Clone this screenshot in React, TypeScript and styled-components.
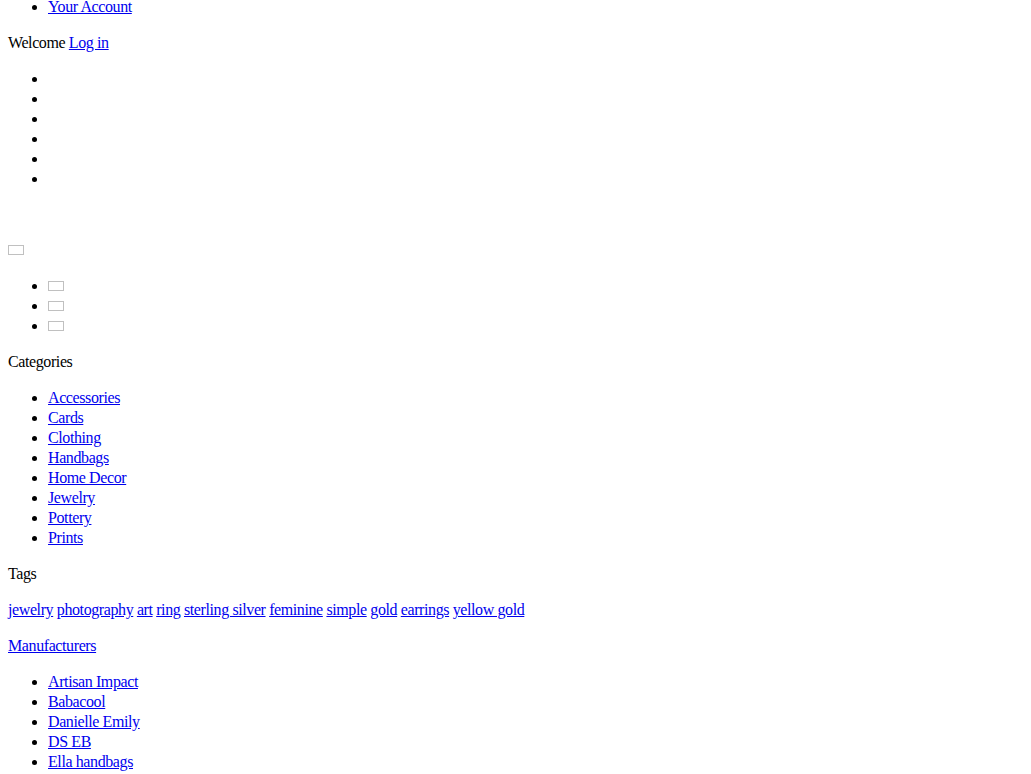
import React from "react";
import styled, { createGlobalStyle } from "styled-components";

const GlobalStyle = createGlobalStyle`
  html, body {
    margin: 0;
    padding: 0;
    background: #ffffff;
  }
  body {
    font-family: "Liberation Serif", "Times New Roman", serif;
    font-size: 16px;
    line-height: 20px;
    letter-spacing: -0.4px;
    color: #000000;
  }
`;

const Page = styled.div`
  padding: 0 8px;
  margin-top: -3px;
`;

const List = styled.ul<{ $first?: boolean }>`
  list-style: disc;
  margin: ${(p) => (p.$first ? "0 0 16px" : "16px 0")};
  padding-left: 40px;
`;

const Item = styled.li`
  min-height: 20px;
`;

const Para = styled.p`
  margin: 16px 0;
`;

const Spacer = styled.div`
  height: 19px;
  margin: 16px 0;
`;

const Link = styled.a`
  color: #0000ee;
  text-decoration: underline;
  cursor: pointer;
`;

const Thumb = styled.span`
  display: inline-block;
  width: 16px;
  height: 10px;
  box-sizing: border-box;
  border: 1px solid #c0c0c0;
`;

const categories = [
  "Accessories",
  "Cards",
  "Clothing",
  "Handbags",
  "Home Decor",
  "Jewelry",
  "Pottery",
  "Prints",
];

const tags = [
  "jewelry",
  "photography",
  "art",
  "ring",
  "sterling silver",
  "feminine",
  "simple",
  "gold",
  "earrings",
  "yellow gold",
];

const manufacturers = [
  "Artisan Impact",
  "Babacool",
  "Danielle Emily",
  "DS EB",
  "Ella handbags",
];

export default function App() {
  return (
    <>
      <GlobalStyle />
      <Page>
        <List $first>
          <Item>
            <Link>Your Account</Link>
          </Item>
        </List>

        <Para>
          Welcome <Link>Log in</Link>
        </Para>

        <List>
          {Array.from({ length: 6 }).map((_, i) => (
            <Item key={i} />
          ))}
        </List>

        <Spacer />

        <Para>
          <Thumb />
        </Para>

        <List>
          {[0, 1, 2].map((i) => (
            <Item key={i}>
              <Thumb />
            </Item>
          ))}
        </List>

        <Para>Categories</Para>
        <List>
          {categories.map((c) => (
            <Item key={c}>
              <Link>{c}</Link>
            </Item>
          ))}
        </List>

        <Para>Tags</Para>
        <Para>
          {tags.map((t, i) => (
            <React.Fragment key={t}>
              {i > 0 && " "}
              <Link>{t}</Link>
            </React.Fragment>
          ))}
        </Para>

        <Para>
          <Link>Manufacturers</Link>
        </Para>
        <List>
          {manufacturers.map((m) => (
            <Item key={m}>
              <Link>{m}</Link>
            </Item>
          ))}
        </List>
      </Page>
    </>
  );
}
